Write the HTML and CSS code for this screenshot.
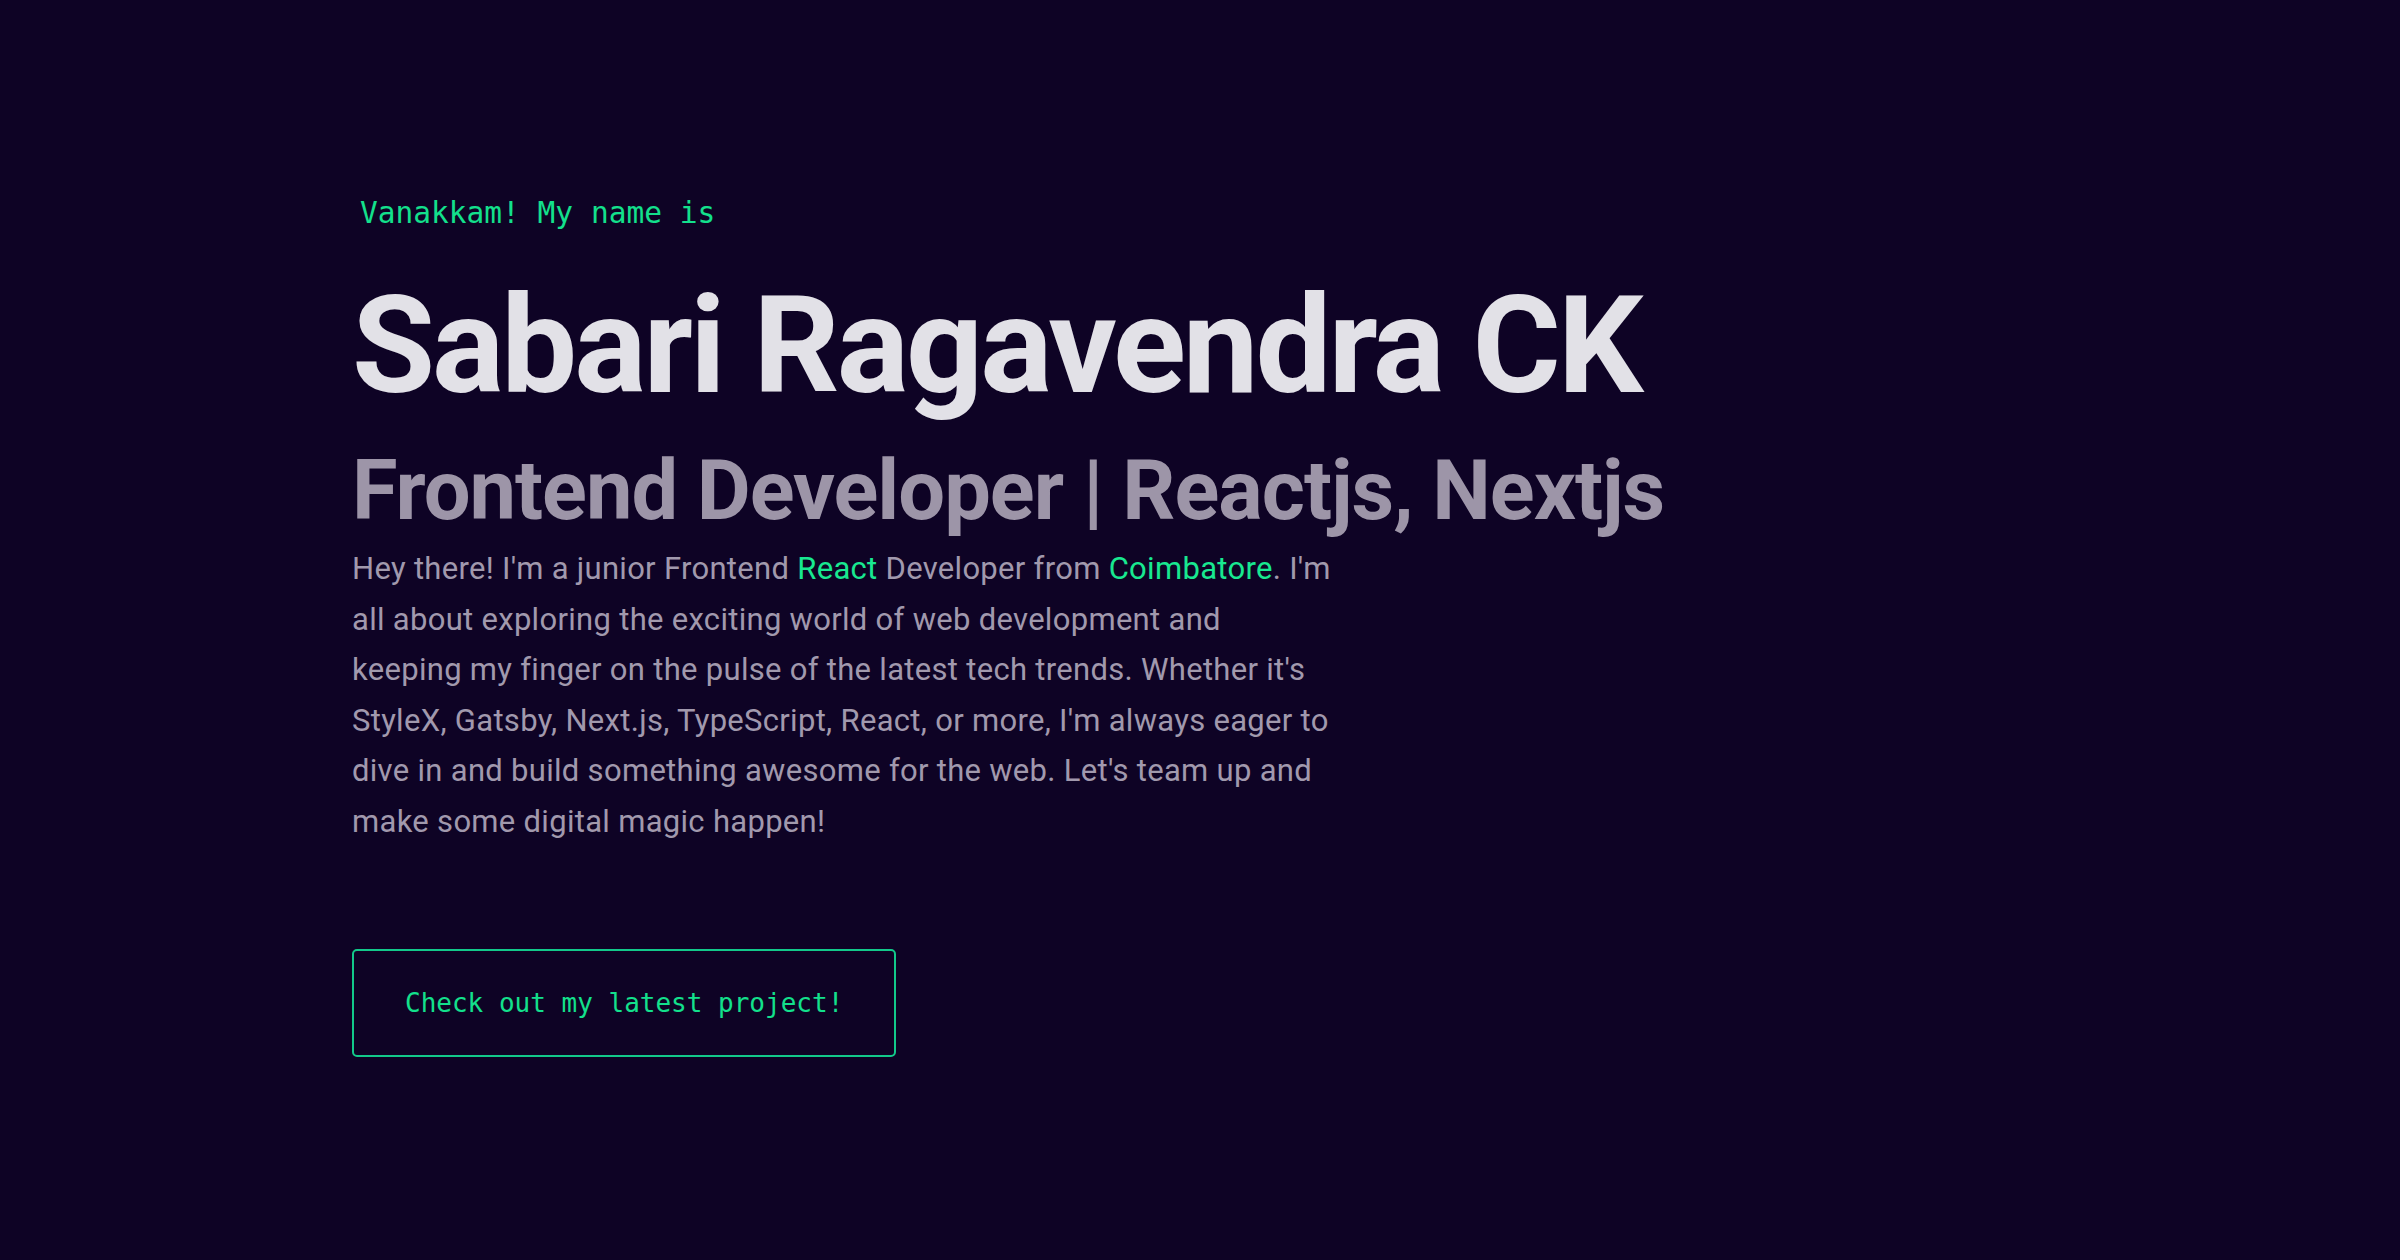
FILE: index.html
```html
<!DOCTYPE html>
<html lang="en">
<head>
<meta charset="utf-8">
<title>Sabari Ragavendra CK</title>
<link rel="stylesheet" href="styles.css">
</head>
<body>
<main class="hero">
  <h1 class="greeting">Vanakkam! My name is</h1>
  <h2 class="name">Sabari Ragavendra CK</h2>
  <h3 class="role">Frontend Developer | Reactjs, Nextjs</h3>
  <p class="intro">Hey there! I'm a junior Frontend <span class="hl">React</span> Developer from <span class="hl">Coimbatore</span>. I'm<br>
  all about exploring the exciting world of web development and<br>
  keeping my finger on the pulse of the latest tech trends. Whether it's<br>
  StyleX, Gatsby, Next.js, TypeScript, React, or more, I'm always eager to<br>
  dive in and build something awesome for the web. Let's team up and<br>
  make some digital magic happen!</p>
  <a class="cta" href="#">Check out my latest project!</a>
</main>
</body>
</html>
```

FILE: styles.css
```css
html, body {
  margin: 0;
  padding: 0;
  background: #0e0325;
}

body {
  font-family: Roboto, "Liberation Sans", sans-serif;
  color: #9d95a8;
}

.hero {
  min-height: 1260px;
  box-sizing: border-box;
  display: flex;
  flex-direction: column;
  justify-content: center;
  align-items: flex-start;
  padding: 0 0 7px 352px;
}

.greeting {
  margin: 0 0 0 8px;
  font-family: "DejaVu Sans Mono", "Liberation Mono", monospace;
  font-weight: 400;
  font-size: 29.5px;
  line-height: 1.2;
  color: #13e08c;
}

.name {
  margin: 41px 0 0 0;
  font-size: 135px;
  font-weight: 700;
  letter-spacing: -3px;
  line-height: 1.1;
  color: #e2e1e7;
}

.role {
  margin: 24px 0 0 0;
  font-size: 83px;
  font-weight: 700;
  letter-spacing: -1px;
  line-height: 1.1;
  color: #9d95a8;
}

.intro {
  margin: 8px 0 0 0;
  max-width: 1020px;
  font-size: 31px;
  letter-spacing: 0.3px;
  line-height: 50.5px;
  color: #a199ad;
}

.hl {
  color: #18e890;
}

.cta {
  margin-top: 102px;
  display: inline-block;
  padding: 36px 51px;
  border: 2px solid #12c98a;
  border-radius: 5px;
  font-family: "DejaVu Sans Mono", "Liberation Mono", monospace;
  font-size: 26px;
  line-height: 32px;
  color: #13e08c;
  text-decoration: none;
}
```
